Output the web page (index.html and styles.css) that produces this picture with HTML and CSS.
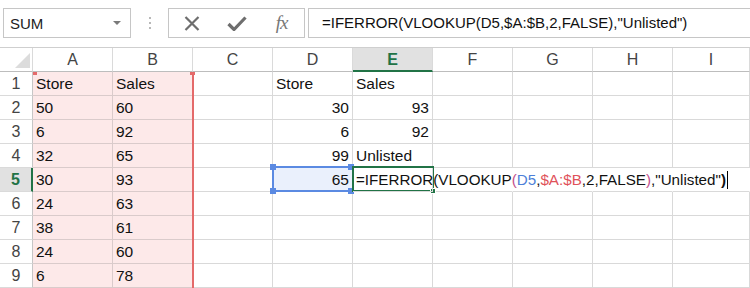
FILE: index.html
```html
<!DOCTYPE html>
<html>
<head>
<meta charset="utf-8">
<link rel="stylesheet" href="styles.css">
</head>
<body>
<div class="app">
  <div class="toolbar">
    <div class="namebox"><span>SUM</span><span class="caret"></span></div>
    <div class="dots"><i></i><i></i><i></i></div>
    <div class="btns">
      <div class="slot">
        <svg width="16" height="15" viewBox="0 0 16 15"><path d="M1.5 1 L14.5 14 M14.5 1 L1.5 14" stroke="#6e6e6e" stroke-width="2.2" fill="none"/></svg>
      </div>
      <div class="slot">
        <svg width="20" height="15" viewBox="0 0 20 15"><path d="M1.5 8 L7 13.5 L18.5 1.5" stroke="#6e6e6e" stroke-width="3.2" fill="none"/></svg>
      </div>
      <div class="slot fx">fx</div>
    </div>
    <div class="formula">=IFERROR(VLOOKUP(D5,$A:$B,2,FALSE),"Unlisted")</div>
  </div>
  <div class="sheet">
    <div class="hd corner"><span class="tri"></span></div>
    <div class="hd">A</div><div class="hd">B</div><div class="hd">C</div><div class="hd">D</div>
    <div class="hd act-col">E</div><div class="hd">F</div><div class="hd">G</div><div class="hd">H</div><div class="hd">I</div>

    <div class="rh">1</div><div class="c p">Store</div><div class="c p">Sales</div><div class="c"></div><div class="c">Store</div><div class="c">Sales</div><div class="c"></div><div class="c"></div><div class="c"></div><div class="c"></div>
    <div class="rh">2</div><div class="c p">50</div><div class="c p">60</div><div class="c"></div><div class="c r">30</div><div class="c r">93</div><div class="c"></div><div class="c"></div><div class="c"></div><div class="c"></div>
    <div class="rh">3</div><div class="c p">6</div><div class="c p">92</div><div class="c"></div><div class="c r">6</div><div class="c r">92</div><div class="c"></div><div class="c"></div><div class="c"></div><div class="c"></div>
    <div class="rh">4</div><div class="c p">32</div><div class="c p">65</div><div class="c"></div><div class="c r">99</div><div class="c">Unlisted</div><div class="c"></div><div class="c"></div><div class="c"></div><div class="c"></div>
    <div class="rh act-row">5</div><div class="c p">30</div><div class="c p">93</div><div class="c"></div><div class="c r dsel">65</div><div class="c edit"><span class="etext">=IFERROR(VLOOKUP<span class="par">(</span><span class="blue">D5</span>,<span class="red">$A:$B</span>,2,FALSE<span class="par">)</span>,"Unlisted"<b>)</b></span><span class="cursor"></span></div><div class="c nl"></div><div class="c nl"></div><div class="c nl"></div><div class="c nl"></div>
    <div class="rh">6</div><div class="c p">24</div><div class="c p">63</div><div class="c"></div><div class="c"></div><div class="c"></div><div class="c"></div><div class="c"></div><div class="c"></div><div class="c"></div>
    <div class="rh">7</div><div class="c p">38</div><div class="c p">61</div><div class="c"></div><div class="c"></div><div class="c"></div><div class="c"></div><div class="c"></div><div class="c"></div><div class="c"></div>
    <div class="rh">8</div><div class="c p">24</div><div class="c p">60</div><div class="c"></div><div class="c"></div><div class="c"></div><div class="c"></div><div class="c"></div><div class="c"></div><div class="c"></div>
    <div class="rh">9</div><div class="c p">6</div><div class="c p">78</div><div class="c"></div><div class="c"></div><div class="c"></div><div class="c"></div><div class="c"></div><div class="c"></div><div class="c"></div>

    <div class="range"><span class="h tl"></span><span class="h tr"></span></div>
    <div class="blue-sel"><span class="bh b1"></span><span class="bh b2"></span><span class="bh b3"></span><span class="bh b4"></span></div>
    <div class="green-sel"><span class="fill"></span></div>
  </div>
</div>
</body>
</html>
```
FILE: styles.css
```css
* { box-sizing: border-box; }
html, body { margin: 0; padding: 0; background: #fff; }
body { font-family: "Liberation Sans", Arial, sans-serif; font-size: 15px; color: #1a1a1a; }
.app { width: 750px; height: 288px; overflow: hidden; }

.toolbar {
  height: 48px;
  display: flex;
  align-items: flex-start;
  padding: 8px 0 0 3px;
  border-bottom: 1px solid #cfcfcf;
}
.namebox {
  width: 128px; height: 30px;
  border: 1px solid #c6c6c6;
  display: flex; align-items: center; justify-content: space-between;
  padding: 0 9px 0 6px;
  color: #222;
}
.caret {
  width: 0; height: 0;
  border-left: 4px solid transparent;
  border-right: 4px solid transparent;
  border-top: 4px solid #7a7a7a;
}
.dots {
  width: 37px; height: 30px;
  display: flex; flex-direction: column; align-items: center; justify-content: center; gap: 3px;
}
.dots i { display: block; width: 2px; height: 2px; background: #b8b8b8; }
.btns {
  width: 137px; height: 30px;
  border: 1px solid #c6c6c6;
  display: flex;
}
.slot { width: 45px; display: flex; align-items: center; justify-content: center; }
.fx {
  font-family: "Liberation Serif", "Times New Roman", serif;
  font-style: italic; font-size: 19px; color: #777;
  letter-spacing: -1px;
}
.formula {
  flex: 1; height: 30px;
  margin-left: 3px;
  border: 1px solid #c6c6c6; border-right: none;
  padding-left: 13px;
  line-height: 28px;
  color: #111;
  white-space: nowrap;
}

.sheet {
  position: relative;
  display: grid;
  grid-template-columns: 33px repeat(8, 80px) 1fr;
  grid-auto-rows: 24px;
}
.hd {
  border-right: 1px solid #dadada;
  border-bottom: 1px solid #bdbdbd;
  text-align: center;
  line-height: 23px;
  font-size: 16px;
  color: #444;
}
.corner { position: relative; }
.tri {
  position: absolute; left: 15px; top: 5px;
  width: 0; height: 0;
  border-left: 15px solid transparent;
  border-bottom: 15px solid #dcdcdc;
}
.act-col {
  background: #e1e1e1;
  color: #217346; font-weight: bold;
  border-bottom: 2px solid #217346;
}
.rh {
  border-right: 1px solid #c6c6c6;
  border-bottom: 1px solid #dadada;
  text-align: center;
  line-height: 23px;
  font-size: 16px;
  color: #444;
}
.act-row {
  background: #e1e1e1;
  color: #217346; font-weight: bold;
  border-right: 2px solid #217346;
}
.c {
  border-right: 1px solid #d9d9d9;
  border-bottom: 1px solid #d9d9d9;
  padding: 0 3px;
  line-height: 23px;
  font-size: 15.5px;
  white-space: nowrap;
  color: #111;
}
.c.p { background: #fde9e9; border-color: #dacbcb; }
.c.r { text-align: right; }
.c.dsel { background: #eaf0fc; }
.c.nl { border-right-color: #fff; }
.edit { position: relative; z-index: 4; overflow: visible; font-size: 15.2px; }
.etext { position: relative; }
.blue { color: #4d7fd8; }
.red { color: #e0525a; }
.par { color: #c4508e; }
.edit b { font-weight: bold; }
.cursor {
  display: inline-block; width: 1px; height: 18px;
  background: #000; vertical-align: -4px; margin-left: 1px;
}

.range {
  position: absolute; left: 33px; top: 24px;
  width: 161px; height: 216px;
  border-right: 2px solid #e46a6a;
  pointer-events: none;
}
.h { position: absolute; width: 4px; height: 3px; background: #e46a6a; }
.tl { left: 0; top: 0; }
.tr { right: -3px; top: 0; width: 5px; }

.blue-sel {
  position: absolute; left: 272px; top: 118px;
  width: 82px; height: 26px;
  border: 2px solid #5b8ae2; border-right: none;
  z-index: 1;
}
.bh { position: absolute; width: 6px; height: 6px; background: #5b8ae2; }
.b1 { left: -4px; top: -4px; }
.b2 { left: -4px; bottom: -4px; }
.b3 { right: 0; top: -4px; }
.b4 { right: 0; bottom: -4px; }

.green-sel {
  position: absolute; left: 352px; top: 118px;
  width: 82px; height: 26px;
  border: 2px solid #217346;
  z-index: 3;
}
.fill {
  position: absolute; right: -4px; bottom: -4px;
  width: 6px; height: 6px; background: #217346;
  border: 1px solid #fff;
}
```
